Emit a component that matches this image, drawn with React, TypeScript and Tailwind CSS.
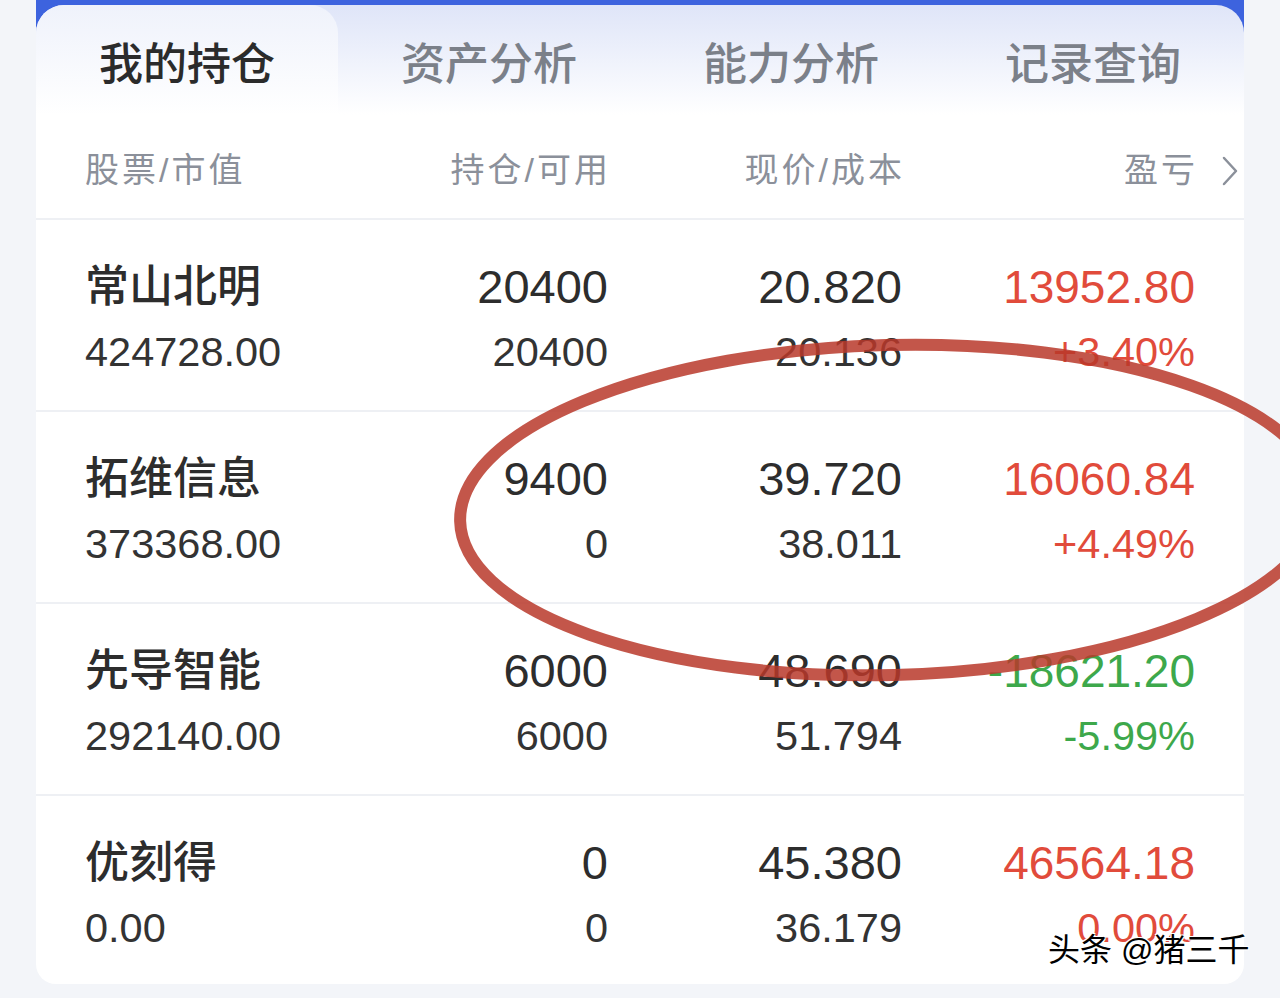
import React from "react";

interface Holding {
  name: string;
  value: string;
  hold: string;
  usable: string;
  price: string;
  cost: string;
  pnl: string;
  pct: string;
  up: boolean;
}

const tabs = ["我的持仓", "资产分析", "能力分析", "记录查询"];

const holdings: Holding[] = [
  { name: "常山北明", value: "424728.00", hold: "20400", usable: "20400", price: "20.820", cost: "20.136", pnl: "13952.80", pct: "+3.40%", up: true },
  { name: "拓维信息", value: "373368.00", hold: "9400", usable: "0", price: "39.720", cost: "38.011", pnl: "16060.84", pct: "+4.49%", up: true },
  { name: "先导智能", value: "292140.00", hold: "6000", usable: "6000", price: "48.690", cost: "51.794", pnl: "-18621.20", pct: "-5.99%", up: false },
  { name: "优刻得", value: "0.00", hold: "0", usable: "0", price: "45.380", cost: "36.179", pnl: "46564.18", pct: "0.00%", up: true },
];

function Row({ item, last }: { item: Holding; last: boolean }) {
  const tone = item.up ? "text-[#e14b3b]" : "text-[#3da84b]";
  return (
    <div
      className={`flex pl-[49px] pt-[40px] ${
        last ? "h-[188px]" : "h-[192px] border-b-2 border-[#eef0f4]"
      }`}
    >
      <div className="w-[250px] flex flex-col gap-[14px]">
        <div className="text-[44px] leading-[54px] font-medium text-[#2d2d2d]">{item.name}</div>
        <div className="text-[41.5px] leading-[48px] text-[#333]">{item.value}</div>
      </div>
      <div className="w-[273px] flex flex-col gap-[14px] text-right">
        <div className="text-[47px] leading-[54px] text-[#2d2d2d]">{item.hold}</div>
        <div className="text-[41.5px] leading-[48px] text-[#333]">{item.usable}</div>
      </div>
      <div className="w-[294px] flex flex-col gap-[14px] text-right">
        <div className="text-[47px] leading-[54px] text-[#2d2d2d]">{item.price}</div>
        <div className="text-[41.5px] leading-[48px] text-[#333]">{item.cost}</div>
      </div>
      <div className={`w-[293px] flex flex-col gap-[14px] text-right ${tone}`}>
        <div className="text-[46px] leading-[54px]">{item.pnl}</div>
        <div className="text-[41.5px] leading-[48px]">{item.pct}</div>
      </div>
    </div>
  );
}

export default function App() {
  return (
    <div
      className="relative h-[998px] overflow-hidden bg-[#f3f5f9]"
      style={{ fontFamily: '"Liberation Sans", "Noto Sans CJK SC", sans-serif' }}
    >
      <div className="ml-[36px] w-[1208px]">
        {/* tab bar */}
        <div className="bg-[#3d63de] pt-[5px]">
          <div className="flex h-[110px] rounded-t-[28px] bg-gradient-to-b from-[#dfe5f8] to-white">
            {tabs.map((t, i) => (
              <div
                key={t}
                className={`flex w-1/4 items-center justify-center pt-[10px] text-[44px] font-medium ${
                  i === 0
                    ? "rounded-t-[28px] bg-gradient-to-b from-[#eff2fb] to-white text-[#2b2b2b]"
                    : "text-[#7b8089]"
                }`}
              >
                {t}
              </div>
            ))}
          </div>
        </div>

        <div className="rounded-b-[20px] bg-white">
          {/* column header */}
          <div className="flex h-[105px] items-center pl-[49px] pt-[8px] text-[34px] tracking-[3px] text-[#8b909a] border-b-2 border-[#eef0f4]">
            <div className="w-[250px]">股票/市值</div>
            <div className="w-[273px] text-right">
              <span className="mr-[-3px]">持仓/可用</span>
            </div>
            <div className="w-[294px] text-right">
              <span className="mr-[-3px]">现价/成本</span>
            </div>
            <div className="w-[293px] text-right">
              <span className="mr-[-3px]">盈亏</span>
            </div>
            <div className="flex w-[49px] pl-[26px]">
              <svg width="18" height="30" viewBox="0 0 18 30" fill="none">
                <polyline points="3,2 15,15 3,28" stroke="#8b909a" strokeWidth="2.5" strokeLinecap="round" strokeLinejoin="round" />
              </svg>
            </div>
          </div>

          {holdings.map((h, i) => (
            <Row key={h.name} item={h} last={i === holdings.length - 1} />
          ))}
        </div>
      </div>

      {/* hand-drawn mark */}
      <svg className="pointer-events-none absolute inset-0" width="1280" height="998" viewBox="0 0 1280 998">
        <ellipse
          cx="890"
          cy="510"
          rx="430"
          ry="165"
          transform="rotate(-1.5 890 510)"
          fill="none"
          stroke="#b8382a"
          strokeOpacity="0.85"
          strokeWidth="12"
        />
      </svg>

      {/* watermark */}
      <div
        className="absolute left-[1048px] top-[930px] text-[32px] leading-[40px] text-black"
        style={{ textShadow: "1px 1px 0 #fff, -1px -1px 0 #fff, 1px -1px 0 #fff, -1px 1px 0 #fff" }}
      >
        头条 @猪三千
      </div>
    </div>
  );
}
